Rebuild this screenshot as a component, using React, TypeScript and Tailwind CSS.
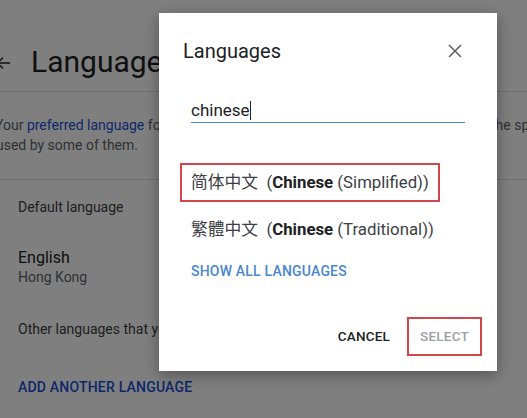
import React from "react";

export default function App() {
  const font = { fontFamily: "Roboto, 'Noto Sans CJK SC', 'Noto Sans CJK TC', sans-serif" };
  return (
    <div className="relative w-[527px] h-[418px] overflow-hidden bg-white text-[#202124]" style={font}>
      {/* Background page */}
      <div className="flex flex-col">
        <div className="flex items-start h-[92px] pt-[46px] border-b border-[#dadce0]">
          <svg width="14" height="14" viewBox="0 0 14 14" className="ml-[-4px] mt-[10px] text-[#202124]">
            <path d="M14 7H2M7 1.5L1.5 7L7 12.5" fill="none" stroke="currentColor" strokeWidth="1.4" />
          </svg>
          <span className="ml-[21px] text-[30px] leading-[32px]">Language</span>
        </div>
        <div className="h-[88px] border-b border-[#dadce0] pt-[23px] text-[14px] leading-[20px] text-[#5f6368]">
          <div className="flex whitespace-nowrap ml-[-5px]">
            <span className="w-[496px] overflow-hidden shrink-0">
              Your <span className="text-[#1a4fd6]">preferred language</span> for Google services and other languages that you
            </span>
            <span>the spoken</span>
          </div>
          <div className="ml-[-4px] whitespace-nowrap">used by some of them.</div>
        </div>
        <div className="pl-[18px] flex flex-col">
          <div className="mt-[19px] text-[14px] leading-[16px] text-[#3c4043]">Default language</div>
          <div className="mt-[33px] text-[16px] leading-[20px]">English</div>
          <div className="text-[14px] leading-[18px] text-[#5f6368]">Hong Kong</div>
          <div className="mt-[33px] text-[14px] leading-[20px] text-[#3c4043]">Other languages that you understand</div>
          <div className="mt-[38px] text-[14px] font-medium tracking-[0.2px] text-[#1a4fd6]">ADD ANOTHER LANGUAGE</div>
        </div>
      </div>

      {/* Scrim */}
      <div className="absolute inset-0 bg-black/50" />

      {/* Dialog */}
      <div className="absolute left-[159px] top-[13px] w-[338px] h-[358px] bg-white shadow-[0_4px_14px_rgba(0,0,0,0.35)] flex flex-col">
        <div className="flex items-center justify-between pl-[24px] pr-[35px] pt-[26px]">
          <span className="text-[20px] leading-[24px] text-[#202124]">Languages</span>
          <svg width="14" height="14" viewBox="0 0 14 14">
            <path d="M1 1L13 13M13 1L1 13" stroke="#5f6368" strokeWidth="1.6" />
          </svg>
        </div>
        <div className="mx-[32px] mt-[36px] border-b-[1.5px] border-[#4f86bd] pb-[1px]">
          <div className="flex items-center text-[17px] leading-[22px] text-[#202124]">
            <span>chinese</span>
            <span className="w-px h-[19px] bg-[#202124]" />
          </div>
        </div>
        <div className="mt-[40px] ml-[21px] self-start border-2 border-[#d2454c] px-[9px] h-[39px] flex items-center text-[16.8px] text-[#3c4043]">
          <span>简体中文&nbsp;&nbsp;(<b className="font-bold text-[#202124]">Chinese</b> (Simplified))</span>
        </div>
        <div className="mt-[8px] ml-[32px] h-[39px] flex items-center text-[16.8px] text-[#3c4043]">
          <span>繁體中文&nbsp;&nbsp;(<b className="font-bold text-[#202124]">Chinese</b> (Traditional))</span>
        </div>
        <div className="mt-[12px] ml-[32px] text-[14px] font-medium leading-[20px] tracking-[0.2px] text-[#4a86d0]">SHOW ALL LANGUAGES</div>
        <div className="mt-[36px] flex items-center justify-end pr-[15px]">
          <span className="text-[13.5px] font-medium tracking-[0.2px] text-[#202124] mr-[17px]">CANCEL</span>
          <div className="border-2 border-[#d2454c] h-[39px] w-[75px] flex items-center justify-center text-[13.5px] font-medium tracking-[0.2px] text-[#9aa0a6]">SELECT</div>
        </div>
      </div>
    </div>
  );
}
